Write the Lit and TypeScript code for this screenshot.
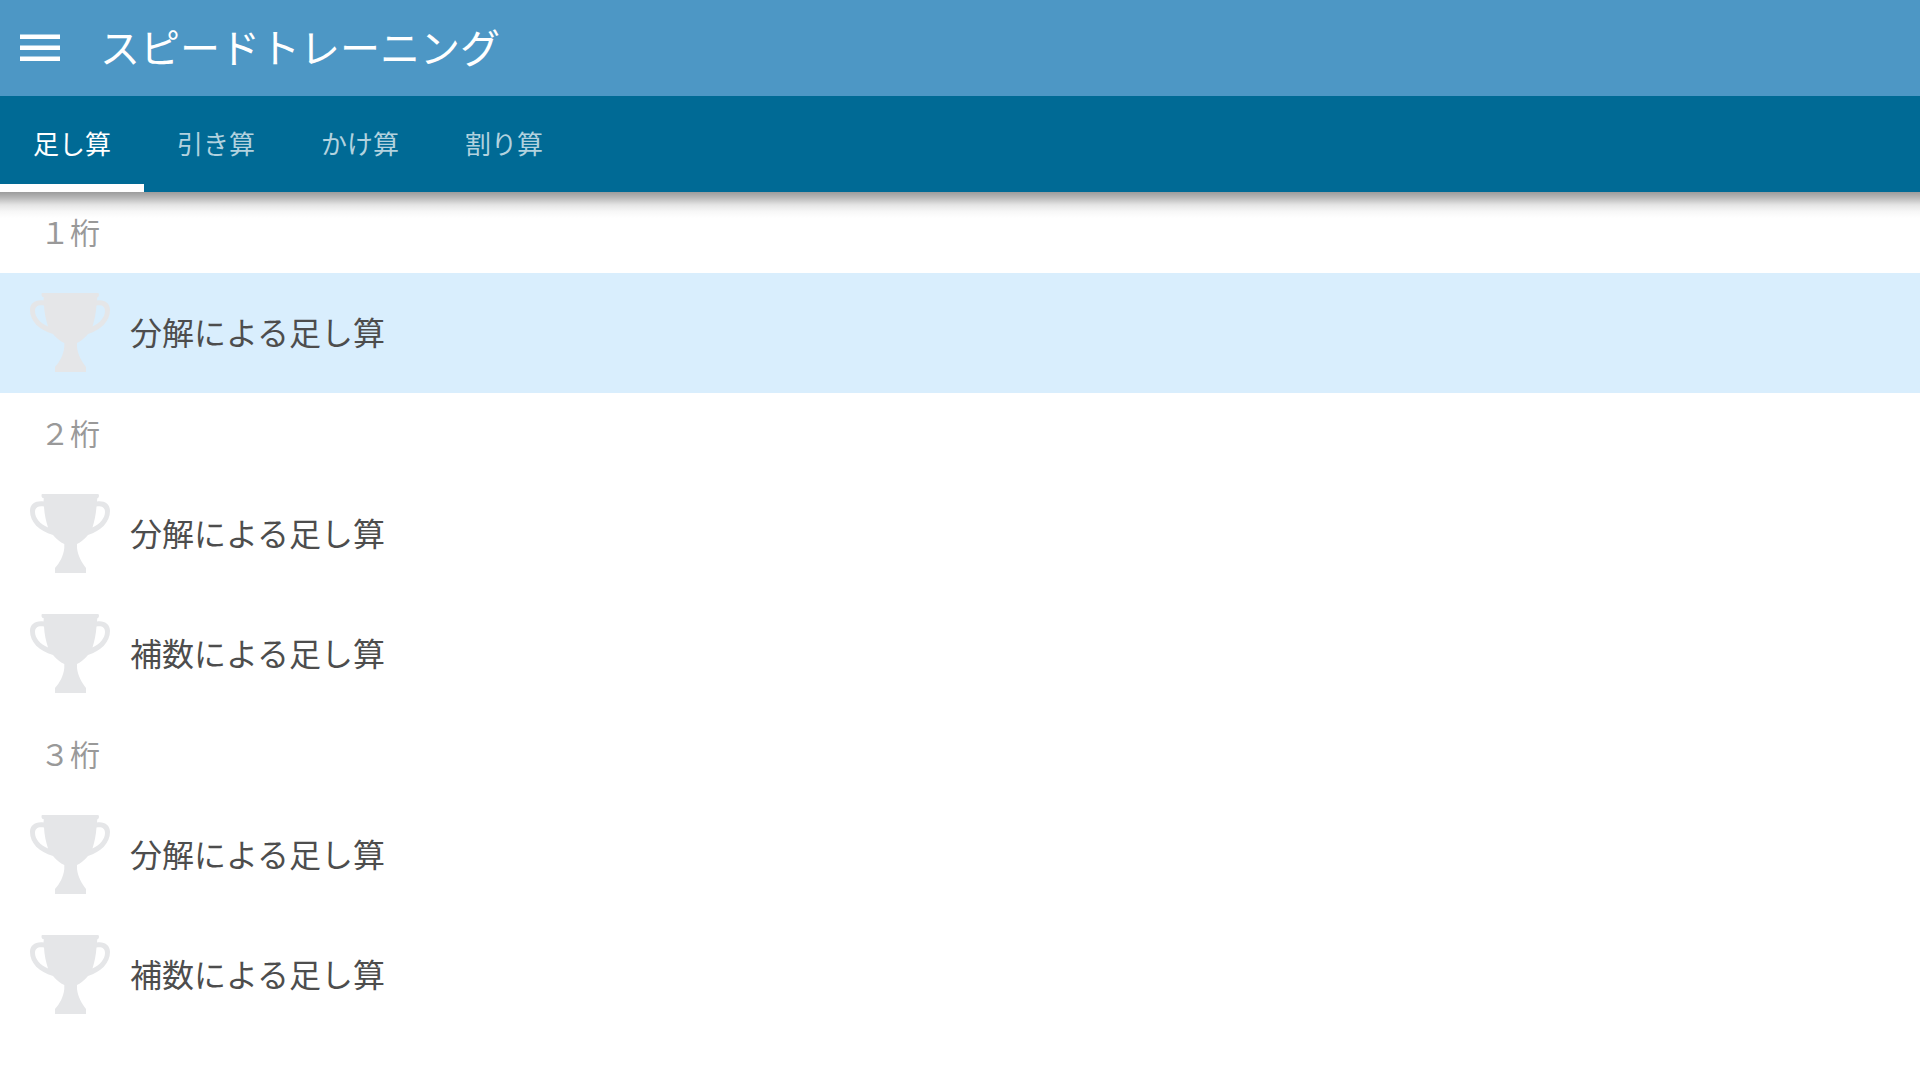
import { LitElement, html, css } from "lit";
import { customElement, property, state } from "lit/decorators.js";

interface Lesson {
  id: string;
  title: string;
}

interface Section {
  title: string;
  lessons: Lesson[];
}

const TABS = ["足し算", "引き算", "かけ算", "割り算"];

const SECTIONS: Section[] = [
  { title: "１桁", lessons: [{ id: "1a", title: "分解による足し算" }] },
  {
    title: "２桁",
    lessons: [
      { id: "2a", title: "分解による足し算" },
      { id: "2b", title: "補数による足し算" },
    ],
  },
  {
    title: "３桁",
    lessons: [
      { id: "3a", title: "分解による足し算" },
      { id: "3b", title: "補数による足し算" },
    ],
  },
];

@customElement("trophy-icon")
export class TrophyIcon extends LitElement {
  static styles = css`
    :host {
      display: block;
      flex: none;
      width: 80px;
      height: 80px;
    }
    .cup {
      display: block;
      width: 100%;
      height: 100%;
      fill: #e5e6e8;
    }
  `;

  render() {
    return html`
      <svg class="cup" viewBox="0 0 80 80" aria-hidden="true">
        <path
          fill-rule="evenodd"
          d="M12 0H68Q69 0 69 1.500C69 3 68.500 4 67.300 4.300L67 7.500C75 6.500 80 10.500 80 17C80 28 71 37 58 41C54 46 50 48.500 47 50V54C48 62 51.500 68 56 74V79H25V74C29.500 69 33.500 62 34.300 54V50C31 48.500 27 46 23 41C9 37 0 28 0 17C0 10.500 5 6.500 13.500 7.500L13.800 4.300C12 4 11.500 3 11.500 1.500Q11.500 0 12 0ZM14 12.500C8 11.500 5 13.500 5 18C5 24 10 30 18 33.500C16 27 14.300 20 14 12.500ZM66.500 12.500C66 20 64.500 27 62.500 33.500C70 30 75 24 75 18C75 13.500 72 11.500 66.500 12.500Z"
        />
      </svg>
    `;
  }
}

@customElement("lesson-section")
export class LessonSection extends LitElement {
  @property({ attribute: false }) section!: Section;
  @property() selected = "";

  static styles = css`
    :host {
      display: block;
    }
    .heading {
      margin: 0;
      padding: 19px 40px 18px;
      font-size: 30px;
      line-height: 44px;
      font-weight: 400;
      color: #999;
    }
    .list {
      margin: 0;
      padding: 0;
      list-style: none;
    }
    .lesson {
      display: flex;
      align-items: center;
      gap: 20px;
      width: 100%;
      padding: 20px 30px;
      border: 0;
      background: transparent;
      color: #4d4d4d;
      font: inherit;
      font-size: 32px;
      line-height: 48px;
      text-align: left;
      cursor: pointer;
    }
    .lesson[aria-current="true"] {
      background: #d9eefd;
    }
  `;

  private choose(id: string) {
    this.dispatchEvent(
      new CustomEvent("lesson-select", { detail: id, bubbles: true, composed: true })
    );
  }

  render() {
    return html`
      <h2 class="heading">${this.section.title}</h2>
      <ul class="list">
        ${this.section.lessons.map(
          (lesson) => html`
            <li>
              <button
                class="lesson"
                type="button"
                aria-current=${lesson.id === this.selected ? "true" : "false"}
                @click=${() => this.choose(lesson.id)}
              >
                <trophy-icon></trophy-icon>
                <span>${lesson.title}</span>
              </button>
            </li>
          `
        )}
      </ul>
    `;
  }
}

@customElement("app-root")
export class AppRoot extends LitElement {
  @state() private tab = 0;
  @state() private selected = "1a";

  static styles = css`
    :host {
      display: block;
      min-height: 100vh;
      background: #fff;
      font-family: "Noto Sans", "Noto Sans CJK JP", sans-serif;
    }
    .top {
      position: relative;
    }
    .top::after {
      content: "";
      position: absolute;
      top: 100%;
      left: 0;
      right: 0;
      height: 26px;
      background: linear-gradient(
        rgba(0, 0, 0, 0.39),
        rgba(0, 0, 0, 0.29) 20%,
        rgba(0, 0, 0, 0.1) 50%,
        rgba(0, 0, 0, 0.03) 75%,
        transparent
      );
      pointer-events: none;
    }
    .bar {
      display: flex;
      align-items: center;
      gap: 40px;
      height: 96px;
      padding: 0 20px;
      background: #4d97c5;
      color: #fff;
    }
    .menu {
      display: flex;
      padding: 0;
      border: 0;
      background: transparent;
      color: inherit;
      cursor: pointer;
    }
    .menu-icon {
      width: 40px;
      height: 28px;
      fill: currentColor;
    }
    .title {
      margin: 0;
      font-size: 40px;
      line-height: 60px;
      font-weight: 400;
    }
    .tabs {
      display: flex;
      height: 96px;
      background: #006a95;
    }
    .tab {
      width: 144px;
      padding: 8px 0 0;
      border: 0;
      border-bottom: 8px solid transparent;
      background: transparent;
      color: #b2d2df;
      font: inherit;
      font-size: 26px;
      line-height: 40px;
      cursor: pointer;
    }
    .tab[aria-selected="true"] {
      border-bottom-color: #fff;
      color: #fff;
    }
  `;

  render() {
    return html`
      <header class="top">
        <div class="bar">
          <button class="menu" type="button" aria-label="メニュー">
            <svg class="menu-icon" viewBox="0 0 40 28" aria-hidden="true">
              <path d="M0 0.500H40V5H0ZM0 11.500H40V16H0ZM0 22.500H40V27H0Z" />
            </svg>
          </button>
          <h1 class="title">スピードトレーニング</h1>
        </div>
        <nav class="tabs" role="tablist">
          ${TABS.map(
            (label, i) => html`
              <button
                class="tab"
                type="button"
                role="tab"
                aria-selected=${i === this.tab ? "true" : "false"}
                @click=${() => (this.tab = i)}
              >
                ${label}
              </button>
            `
          )}
        </nav>
      </header>
      <main @lesson-select=${(e: CustomEvent<string>) => (this.selected = e.detail)}>
        ${SECTIONS.map(
          (section) => html`
            <lesson-section .section=${section} .selected=${this.selected}></lesson-section>
          `
        )}
      </main>
    `;
  }
}
